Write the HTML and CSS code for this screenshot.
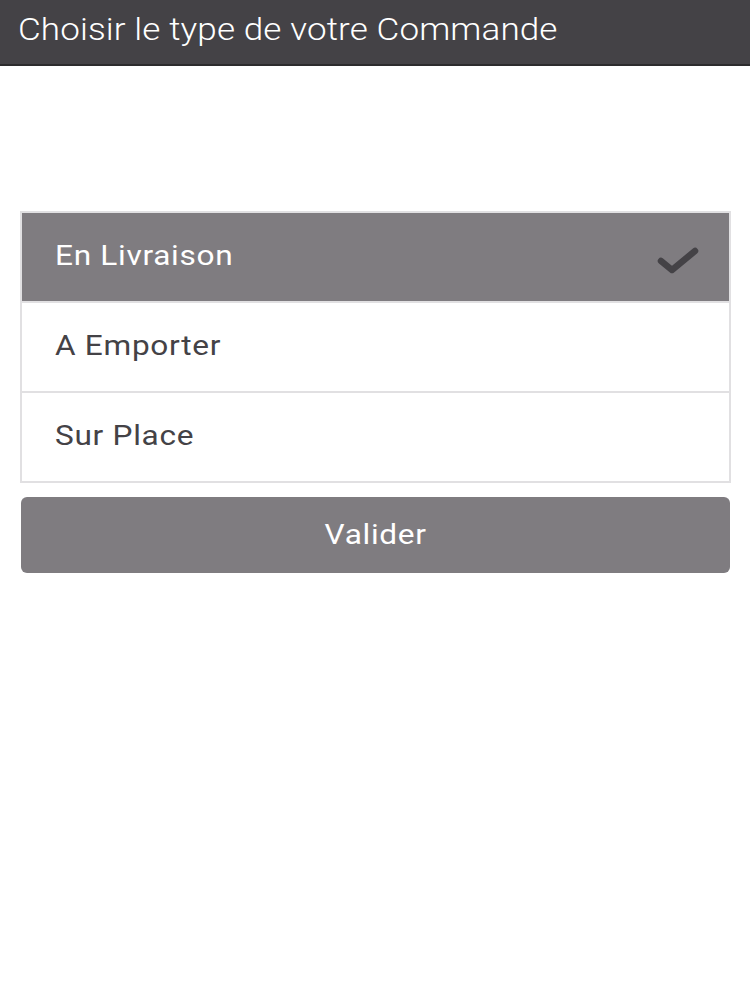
FILE: index.html
```html
<!DOCTYPE html>
<html lang="fr">
<head>
<meta charset="utf-8">
<title>Choisir le type de votre Commande</title>
<link rel="stylesheet" href="styles.css">
</head>
<body>
<header class="topbar">
  <h1 class="title"><span class="wide title-wide">Choisir le type de votre Commande</span></h1>
</header>
<main class="content">
  <ul class="options">
    <li class="option selected">
      <span class="label wide">En Livraison</span>
      <svg class="check" width="44" height="30" viewBox="0 0 44 30"><path d="M4 16 L15 25 L38 6" fill="none" stroke="#444246" stroke-width="6.5" stroke-linecap="round" stroke-linejoin="round"/></svg>
    </li>
    <li class="option"><span class="label wide">A Emporter</span></li>
    <li class="option"><span class="label wide">Sur Place</span></li>
  </ul>
  <button class="validate" type="button"><span class="wide centered">Valider</span></button>
</main>
</body>
</html>
```
FILE: styles.css
```css
html, body {
  margin: 0;
  padding: 0;
  background: #ffffff;
  font-family: Roboto, "Liberation Sans", sans-serif;
}
.wide {
  display: inline-block;
  transform: scaleX(1.17);
  transform-origin: left center;
}
.wide.title-wide {
  transform: scaleX(1.13);
}
.wide.centered {
  transform-origin: center center;
}
.topbar {
  height: 66px;
  background: #444246;
  border-bottom: 2px solid #2c2b2d;
  display: flex;
  align-items: center;
  padding-left: 18px;
  box-sizing: border-box;
}
.title {
  margin: 0;
  color: #ffffff;
  font-weight: 300;
  font-size: 31px;
  letter-spacing: 0.1px;
  padding-bottom: 5px;
}
.content {
  padding: 145px 19px 0 20px;
}
.options {
  list-style: none;
  margin: 0;
  padding: 0;
  border: 2px solid #e1e0e2;
}
.option {
  height: 88px;
  display: flex;
  align-items: center;
  justify-content: space-between;
  padding: 0 28px 0 33px;
  background: #ffffff;
  color: #444246;
  font-size: 27px;
  letter-spacing: 0.6px;
}
.option + .option {
  border-top: 2px solid #e1e0e2;
}
.option.selected {
  background: #7f7c80;
  color: #ffffff;
}
.label {
  padding-bottom: 2px;
}
.check {
  margin-top: 6px;
}
.validate {
  display: block;
  width: 709px;
  height: 76px;
  margin: 14px 0 0 1px;
  border: none;
  border-radius: 6px;
  background: #7f7c80;
  color: #ffffff;
  font-family: Roboto, "Liberation Sans", sans-serif;
  font-size: 27px;
  letter-spacing: 0.6px;
  cursor: pointer;
}
```
